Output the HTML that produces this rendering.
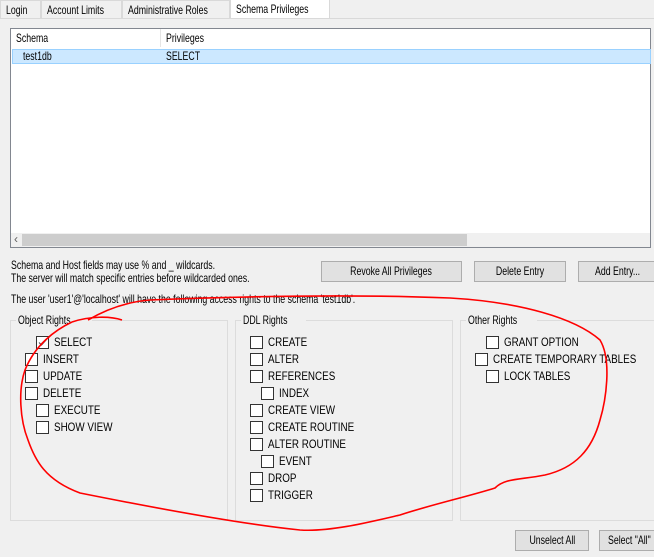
<!DOCTYPE html>
<html><head><style>
body{margin:0;width:654px;height:557px;background:#f0f0f0;font-family:"Liberation Sans",sans-serif;font-size:12px;color:#000;position:relative;overflow:hidden}
.a{position:absolute}
.s{display:inline-block;transform:scaleX(.73);transform-origin:left center;white-space:nowrap}
.u{display:inline-block;transform:scaleX(.82);transform-origin:left center;white-space:nowrap}
.c .s{transform-origin:center center}
.tab{position:absolute;top:0;height:18px;border:1px solid #d9d9d9;border-bottom:none;background:#f0f0f0;line-height:19px;padding:0 5px;box-sizing:border-box;white-space:nowrap;overflow:hidden}
.btn{position:absolute;height:21px;border:1px solid #adadad;background:#e1e1e1;box-sizing:border-box;text-align:center;line-height:19px;white-space:nowrap;overflow:hidden}
.grp{position:absolute;border:1px solid #dcdcdc;top:320px;height:199px}
.lg{position:absolute;top:-8px;left:5px;background:#f0f0f0;padding:0 2px;white-space:nowrap}
.cb{position:absolute;width:11px;height:11px;border:1px solid #333;background:#fff}
.lb{position:absolute;white-space:nowrap;line-height:13px}
</style></head><body>
<div class="tab" style="left:0;width:41px"><span class="s">Login</span></div>
<div class="tab" style="left:41px;width:81px"><span class="s">Account Limits</span></div>
<div class="tab" style="left:122px;width:108px"><span class="s">Administrative Roles</span></div>
<div class="tab" style="left:230px;top:-2px;height:21px;width:100px;background:#fff;line-height:20px"><span class="s">Schema Privileges</span></div>
<div class="a" style="left:0;top:18px;width:654px;height:1px;background:#d9d9d9"></div>
<div class="a" style="left:10px;top:28px;width:641px;height:220px;background:#fff;border:1px solid #828790;box-sizing:border-box"></div>
<div class="a" style="left:160px;top:29px;width:1px;height:18px;background:#e5e5e5"></div>
<div class="lb" style="left:16px;top:32px"><span class="s">Schema</span></div>
<div class="lb" style="left:166px;top:32px"><span class="s">Privileges</span></div>
<div class="a" style="left:12px;top:49px;width:639px;height:15px;background:#cce8ff;border:1px solid #99d1ff;box-sizing:border-box"></div>
<div class="lb" style="left:23px;top:50px"><span class="s">test1db</span></div>
<div class="lb" style="left:166px;top:50px"><span class="s">SELECT</span></div>
<div class="a" style="left:11px;top:233px;width:639px;height:14px;background:#f0f0f0"></div>
<div class="a" style="left:22px;top:234px;width:445px;height:12px;background:#cdcdcd"></div>
<div class="lb" style="left:14px;top:233px;color:#606060">‹</div>
<div class="lb" style="left:11px;top:259px"><span class="s">Schema and Host fields may use % and _ wildcards.</span></div>
<div class="lb" style="left:11px;top:272px"><span class="s">The server will match specific entries before wildcarded ones.</span></div>
<div class="btn c" style="left:321px;top:261px;width:141px"><span class="s">Revoke All Privileges</span></div>
<div class="btn c" style="left:474px;top:261px;width:92px"><span class="s">Delete Entry</span></div>
<div class="btn" style="left:578px;top:261px;width:80px;text-align:left;padding-left:16px"><span class="s">Add Entry...</span></div>
<div class="lb" style="left:11px;top:293px"><span class="s">The user 'user1'@'localhost' will have the following access rights to the schema 'test1db'.</span></div>
<div class="grp" style="left:10px;width:216px"><span class="lg"><span class="s">Object Rights</span></span></div>
<div class="grp" style="left:235px;width:216px"><span class="lg"><span class="s">DDL Rights</span></span></div>
<div class="grp" style="left:460px;width:200px"><span class="lg"><span class="s">Other Rights</span></span></div>
<div class="btn c" style="left:515px;top:530px;width:74px"><span class="s">Unselect All</span></div>
<div class="btn" style="left:599px;top:530px;width:60px;text-align:left;padding-left:8px"><span class="s">Select "All"</span></div>
<div id="c"></div>
<script>
var items=[[36,342,"SELECT",1],[25,359,"INSERT"],[25,376,"UPDATE"],[25,393,"DELETE"],[36,410,"EXECUTE"],[36,427,"SHOW VIEW"],
[250,342,"CREATE"],[250,359,"ALTER"],[250,376,"REFERENCES"],[261,393,"INDEX"],[250,410,"CREATE VIEW"],[250,427,"CREATE ROUTINE"],[250,444,"ALTER ROUTINE"],[261,461,"EVENT"],[250,478,"DROP"],[250,495,"TRIGGER"],
[486,342,"GRANT OPTION"],[475,359,"CREATE TEMPORARY TABLES"],[486,376,"LOCK TABLES"]];
var h="";items.forEach(function(i){h+='<div class="cb" style="left:'+i[0]+'px;top:'+(i[1]-6)+'px">'+(i[3]?'<svg width="11" height="11" style="position:absolute;left:0;top:0"><path d="M2 5.5 L4.5 8 L9.5 2.5" stroke="#555" stroke-width="1.2" fill="none"/></svg>':'')+'</div><div class="lb" style="left:'+(i[0]+18)+'px;top:'+(i[1]-6)+'px"><span class="u">'+i[2]+'</span></div>';});
document.getElementById("c").innerHTML=h;
</script>
<svg class="a" style="left:0;top:0" width="654" height="557"><path d="M88 320 C105 310,125 302,150 300 C250 296,350 294,450 298 C520 302,575 318,600 340 C612 360,606 400,600 420 C592 450,575 468,545 475 C520 480,505 478,495 488 C470 496,430 505,400 515 C370 522,330 532,300 530 C250 525,180 513,80 493 C45 480,35 460,28 440 C20 420,18 390,25 370 C35 345,55 330,72 322" stroke="#f00" stroke-width="1.6" fill="none"/><path d="M72 322 C90 316,110 316,122 320" stroke="#f00" stroke-width="1.6" fill="none"/></svg>
</body></html>
